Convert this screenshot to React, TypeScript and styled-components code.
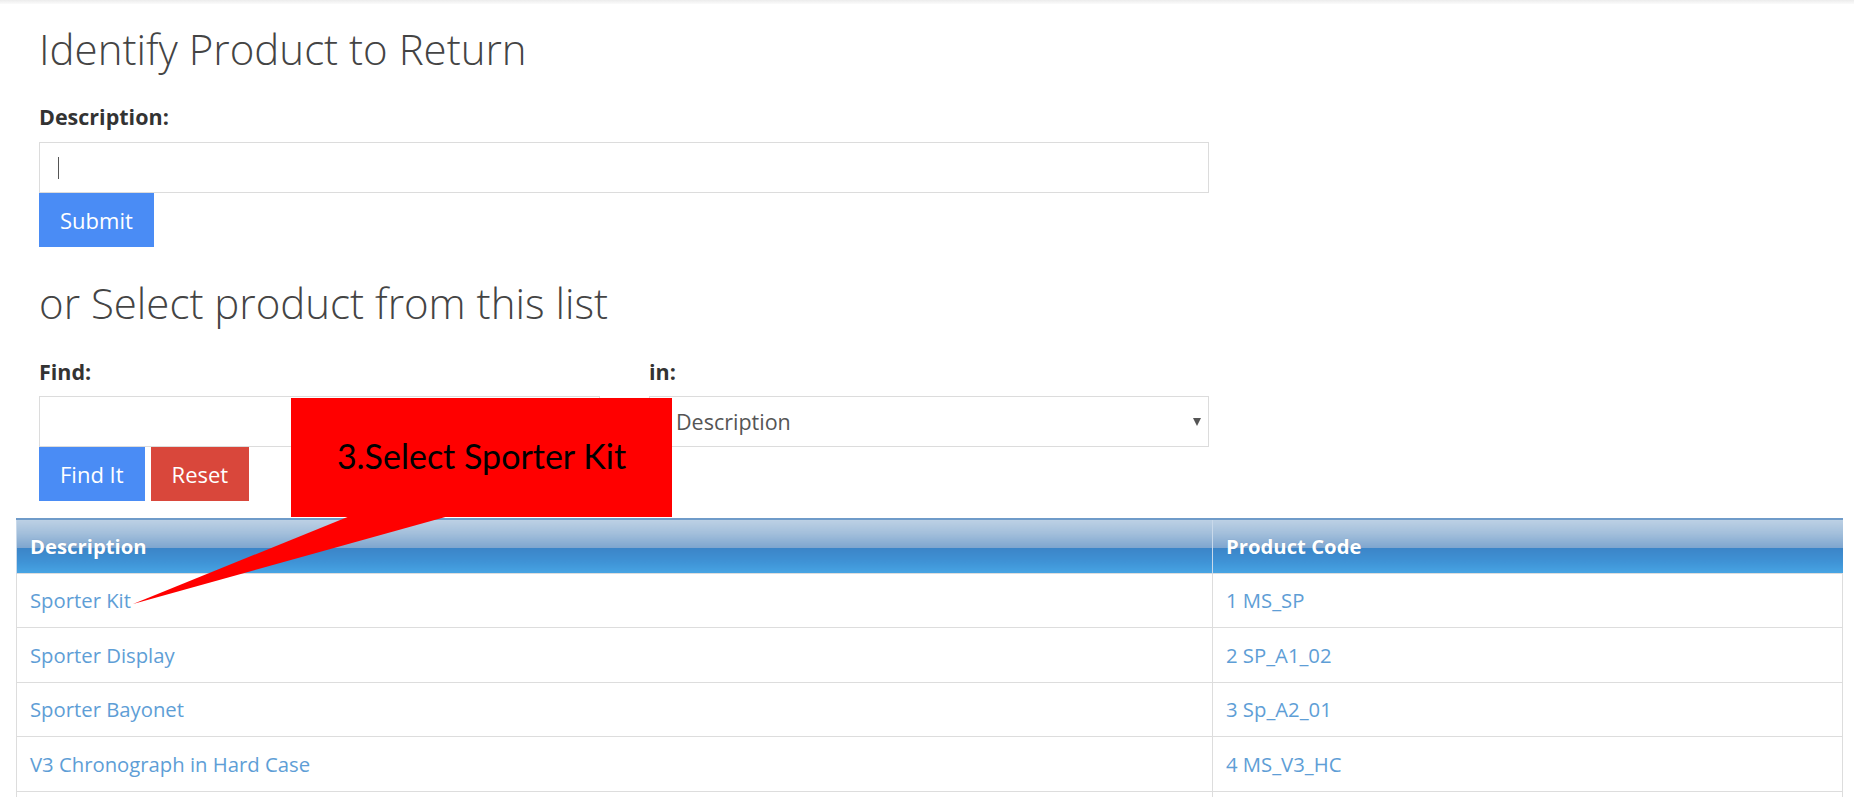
import React from "react";
import styled, { createGlobalStyle } from "styled-components";

const GlobalStyle = createGlobalStyle`
  html, body {
    margin: 0;
    padding: 0;
    background: #ffffff;
    font-family: "Open Sans", "Noto Sans", "Liberation Sans", sans-serif;
    color: #333333;
    overflow: hidden;
  }
  * { box-sizing: border-box; }
`;

const Page = styled.div`
  position: relative;
  width: 1854px;
  height: 797px;
  overflow: hidden;
`;

const TopShade = styled.div`
  height: 4px;
  background: linear-gradient(#ececec, #fbfbfb);
`;

const Main = styled.main`
  padding: 0 11px 0 16px;
`;

const FormArea = styled.section`
  width: 1193px;
  padding-left: 23px;
  display: flex;
  flex-direction: column;
`;

const Heading = styled.h2<{ $top: number }>`
  margin: ${(p) => p.$top}px 0 0;
  font-size: 42px;
  line-height: 41px;
  font-weight: 300;
  color: #444444;
  letter-spacing: 0;
  white-space: nowrap;
`;

const Label = styled.label<{ $top: number; $bottom: number }>`
  display: block;
  margin: ${(p) => p.$top}px 0 ${(p) => p.$bottom}px;
  font-size: 21.5px;
  line-height: 25px;
  font-weight: 700;
  color: #333333;
`;

const TextBox = styled.div`
  height: 51px;
  border: 1px solid #dcdcdc;
  background: #ffffff;
  display: flex;
  align-items: center;
  padding-left: 18px;
`;

const Caret = styled.span`
  display: block;
  width: 1px;
  height: 22px;
  background: #555555;
`;

const FindInput = styled.input`
  width: 100%;
  height: 51px;
  border: 1px solid #dcdcdc;
  background: #ffffff;
  padding: 0 18px;
  font-family: inherit;
  font-size: 20px;
  outline: none;
`;

const Button = styled.button<{ $variant: "primary" | "danger" }>`
  height: 54px;
  border: none;
  border-radius: 0;
  padding: 0 ${(p) => (p.$variant === "danger" ? 21 : 21)}px;
  background: ${(p) => (p.$variant === "danger" ? "#d9473b" : "#4a8cf5")};
  color: #ffffff;
  font-family: inherit;
  font-size: 22px;
  line-height: 1;
  cursor: pointer;
`;

const SubmitRow = styled.div`
  display: flex;
`;

const FindGrid = styled.div`
  display: grid;
  grid-template-columns: 561px 560px;
  column-gap: 49px;
  margin-top: 36px;
`;

const FieldCol = styled.div`
  display: flex;
  flex-direction: column;
`;

const SelectBox = styled.div`
  height: 51px;
  border: 1px solid #dcdcdc;
  background: #ffffff;
  display: flex;
  align-items: center;
  justify-content: space-between;
  padding: 0 7px 0 26px;
  font-size: 21.5px;
  color: #555555;
`;

const Arrow = styled.span`
  width: 0;
  height: 0;
  border-left: 4.5px solid transparent;
  border-right: 4.5px solid transparent;
  border-top: 8px solid #555555;
`;

const ButtonRow = styled.div`
  display: flex;
  gap: 6px;
`;

const Table = styled.table`
  margin-top: 17px;
  width: 1827px;
  border-collapse: collapse;
  table-layout: fixed;
  font-size: 20.3px;
`;

const HeadCell = styled.th<{ $w?: number }>`
  width: ${(p) => (p.$w ? `${p.$w}px` : "auto")};
  height: 54px;
  padding: 0 13px;
  text-align: left;
  font-weight: 700;
  color: #ffffff;
  border-top: 2px solid #6f9bc9;
  border-left: 1px solid #c9d9ea;
  background: linear-gradient(
    to bottom,
    #bcd0e4 0%,
    #a3bfdb 25%,
    #7fa6cf 52%,
    #3b84c7 53%,
    #3f93d6 80%,
    #47a4e3 100%
  );
  text-shadow: 0 0 1px rgba(0, 0, 0, 0.15);
`;

const Row = styled.tr`
  height: 54.5px;
`;

const Cell = styled.td`
  padding: 0 13px;
  border: 1px solid #dddddd;
  vertical-align: middle;
`;

const ProductLink = styled.a`
  color: #5e9ed6;
  text-decoration: none;
`;

const Callout = styled.div`
  position: absolute;
  left: 291px;
  top: 398px;
  width: 381px;
  height: 119px;
  background: #ff0000;
  display: flex;
  justify-content: center;
  padding-top: 37px;
  font-family: Lato, "Open Sans", sans-serif;
  font-size: 34px;
  line-height: 42px;
  color: #000000;
  white-space: nowrap;
`;

const Pointer = styled.svg`
  position: absolute;
  left: 0;
  top: 0;
  pointer-events: none;
`;

const products = [
  { name: "Sporter Kit", code: "1 MS_SP" },
  { name: "Sporter Display", code: "2 SP_A1_02" },
  { name: "Sporter Bayonet", code: "3 Sp_A2_01" },
  { name: "V3 Chronograph in Hard Case", code: "4 MS_V3_HC" },
  { name: "", code: "" },
];

export default function App() {
  return (
    <Page>
      <GlobalStyle />
      <TopShade />
      <Main>
        <FormArea>
          <Heading $top={24}>Identify Product to Return</Heading>
          <Label $top={35} $bottom={13}>Description:</Label>
          <TextBox>
            <Caret />
          </TextBox>
          <SubmitRow>
            <Button $variant="primary">Submit</Button>
          </SubmitRow>

          <Heading $top={35}>or Select product from this list</Heading>
          <FindGrid>
            <FieldCol>
              <Label $top={0} $bottom={12}>Find:</Label>
              <FindInput type="text" readOnly />
            </FieldCol>
            <FieldCol>
              <Label $top={0} $bottom={12}>in:</Label>
              <SelectBox>
                <span>Description</span>
                <Arrow />
              </SelectBox>
            </FieldCol>
          </FindGrid>
          <ButtonRow>
            <Button $variant="primary">Find It</Button>
            <Button $variant="danger">Reset</Button>
          </ButtonRow>
        </FormArea>

        <Table>
          <thead>
            <tr>
              <HeadCell $w={1196}>Description</HeadCell>
              <HeadCell>Product Code</HeadCell>
            </tr>
          </thead>
          <tbody>
            {products.map((p, i) => (
              <Row key={i}>
                <Cell>
                  {p.name && <ProductLink href="#">{p.name}</ProductLink>}
                </Cell>
                <Cell>
                  {p.code && <ProductLink href="#">{p.code}</ProductLink>}
                </Cell>
              </Row>
            ))}
          </tbody>
        </Table>
      </Main>

      <Pointer width="1854" height="797" viewBox="0 0 1854 797">
        <polygon points="350,516 449,516 133,604" fill="#ff0000" />
      </Pointer>
      <Callout>3.Select Sporter Kit</Callout>
    </Page>
  );
}
